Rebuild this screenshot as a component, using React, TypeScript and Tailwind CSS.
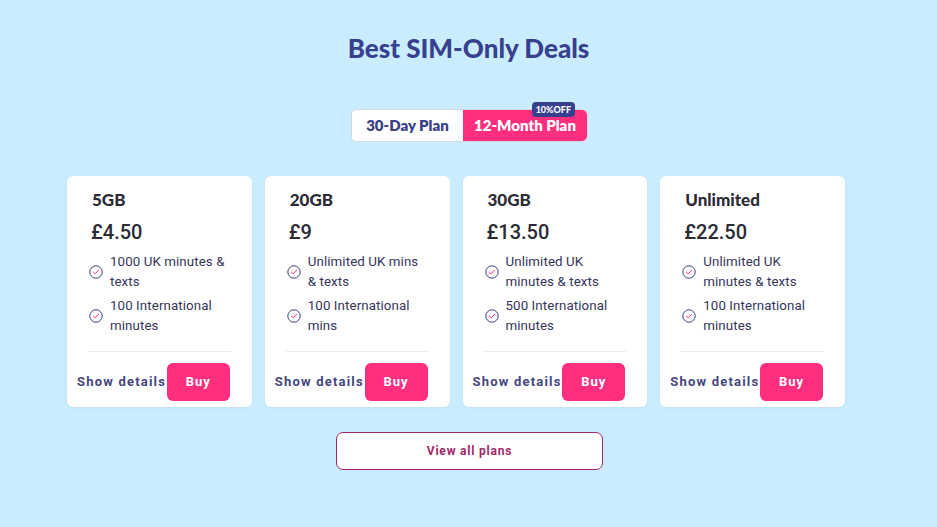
import React from 'react';

interface Plan {
  name: string;
  price: string;
  features: string[];
}

const plans: Plan[] = [
  { name: '5GB', price: '£4.50', features: ['1000 UK minutes & texts', '100 International minutes'] },
  { name: '20GB', price: '£9', features: ['Unlimited UK mins & texts', '100 International mins'] },
  { name: '30GB', price: '£13.50', features: ['Unlimited UK minutes & texts', '500 International minutes'] },
  { name: 'Unlimited', price: '£22.50', features: ['Unlimited UK minutes & texts', '100 International minutes'] },
];

const CheckIcon = () => (
  <svg width="14" height="14" viewBox="0 0 14 14" fill="none" className="shrink-0">
    <circle cx="7" cy="7" r="6.2" stroke="#3b3f7a" strokeWidth="1" />
    <path d="M4.4 7.1 L6.2 8.8 L9.6 5.3" stroke="#ff2e7e" strokeWidth="1" strokeLinecap="round" strokeLinejoin="round" />
  </svg>
);

const PlanCard: React.FC<{ plan: Plan }> = ({ plan }) => (
  <div className="bg-white rounded-[6px] h-[231px] flex flex-col shadow-[0_1px_3px_rgba(0,0,0,0.05)]">
    <div className="px-[21px] pt-[14px]">
      <h3 className="font-['Lato',sans-serif] font-black text-[17px] leading-[20px] text-[#2b2b35] pl-[4px]">{plan.name}</h3>
      <p className="font-['Roboto',sans-serif] font-medium text-[20px] leading-[24px] text-[#2b2b35] mt-[10px] pl-[3px]">{plan.price}</p>
      <ul className="mt-[8px] flex flex-col gap-[4px]">
        {plan.features.map(f => (
          <li key={f} className="flex items-center gap-[7px] pl-[1px]">
            <CheckIcon />
            <span className="font-['Roboto',sans-serif] text-[13.3px] leading-[20px] tracking-[0.1px] text-[#35365a] w-[122px]">{f}</span>
          </li>
        ))}
      </ul>
      <div className="border-t border-[#ececf0] mt-[15px]" />
    </div>
    <div className="flex items-center pl-[10px] pr-[22px] mt-[11px]">
      <button className="font-['Roboto',sans-serif] font-bold text-[13px] tracking-[1.2px] text-[#45467e] whitespace-nowrap">Show details</button>
      <button className="ml-auto w-[63px] h-[38px] rounded-[6px] bg-[#ff2e7e] text-white font-['Roboto',sans-serif] font-bold text-[13px] tracking-[1px]">Buy</button>
    </div>
  </div>
);

export default function App() {
  return (
    <div className="min-h-[527px] w-full bg-[#c9edfe] flex flex-col items-center pt-[31px]">
      <h1 className="font-['Lato',sans-serif] font-black text-[26px] leading-[34px] text-[#373f8f]">Best SIM-Only Deals</h1>
      <div className="mt-[44px] ml-[2px] relative flex h-[33px] rounded-[5px] border border-[#d3d6e0] bg-white">
        <button className="w-[111px] font-['Lato',sans-serif] font-extrabold text-[15px] text-[#3a4088] rounded-l-[5px]">30-Day Plan</button>
        <button className="w-[124px] font-['Lato',sans-serif] font-extrabold text-[15px] text-white bg-[#ff2e7e] rounded-r-[5px]">12-Month Plan</button>
        <span className="absolute right-[12px] top-[-8px] h-[15px] px-[4px] rounded-[4px] bg-[#373f8f] text-white font-['Lato',sans-serif] font-black text-[9px] leading-[15px]">10%OFF</span>
      </div>
      <div className="w-[803px] pr-[25px] mt-[34px] grid grid-cols-4 gap-[13px]">
        {plans.map(p => <PlanCard key={p.name} plan={p} />)}
      </div>
      <button className="mt-[25px] ml-[2px] w-[267px] h-[38px] bg-white border border-[#a3276b] rounded-[7px] font-['Roboto',sans-serif] font-bold text-[12px] tracking-[0.8px] text-[#a3276b]">View all plans</button>
    </div>
  );
}
